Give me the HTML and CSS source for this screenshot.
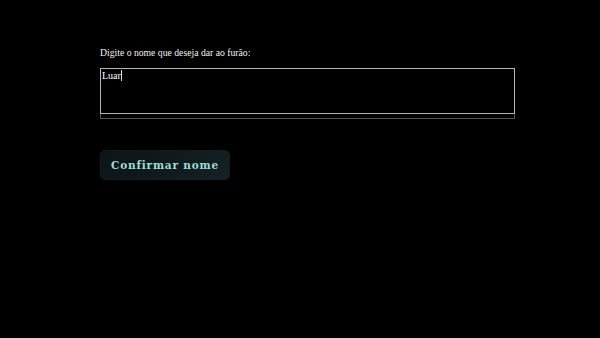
FILE: index.html
```html
<!DOCTYPE html>
<html lang="pt">
<head>
<meta charset="utf-8">
<link rel="stylesheet" href="styles.css">
</head>
<body>
<main class="page">
  <label class="label" for="nome">Digite o nome que deseja dar ao furão:</label>
  <div class="field">
    <div class="input" id="nome">Luar<span class="caret"></span></div>
    <div class="underbar"></div>
  </div>
  <button class="btn">Confirmar nome</button>
</main>
</body>
</html>
```
FILE: styles.css
```css
html, body {
  margin: 0;
  background: #000;
  height: 100%;
}
.page {
  padding: 46px 0 0 100px;
  display: flex;
  flex-direction: column;
  align-items: flex-start;
  font-family: "Liberation Serif", "Times New Roman", serif;
  color: #fff;
}
.label {
  font-size: 9.7px;
  line-height: 13px;
  color: #f2f2f2;
}
.field {
  margin-top: 9px;
  width: 415px;
}
.input {
  box-sizing: border-box;
  height: 46px;
  border: 1px solid #b5b5b5;
  padding: 1px 1px;
  font-size: 10px;
  line-height: 12px;
  color: #fff;
}
.caret {
  display: inline-block;
  width: 1px;
  height: 11px;
  background: #ddd;
  vertical-align: -2px;
}
.underbar {
  box-sizing: border-box;
  height: 5px;
  border: 1px solid #555;
  border-top: none;
}
.btn {
  margin-top: 31px;
  width: 130px;
  height: 30px;
  border: 1px solid #141d1f;
  border-radius: 5px;
  background: linear-gradient(135deg, #0b1416, #152124);
  color: #9fded6;
  font-family: "DejaVu Serif", Georgia, serif;
  font-weight: bold;
  font-size: 10.5px;
  letter-spacing: 0.8px;
  padding: 0;
  cursor: pointer;
}
```
